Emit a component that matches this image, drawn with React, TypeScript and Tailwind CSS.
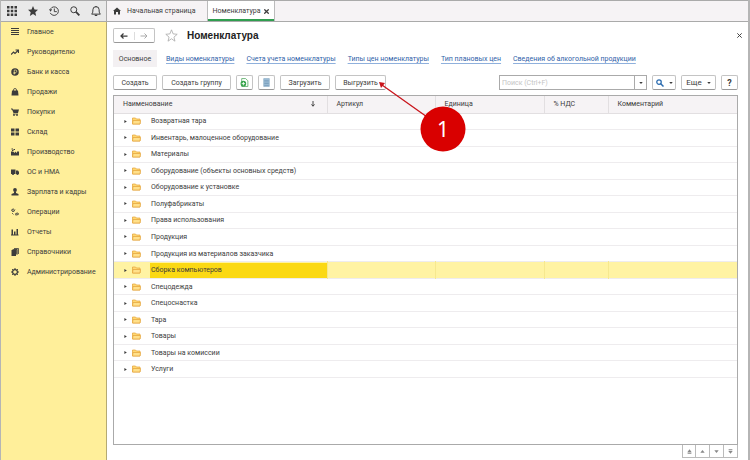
import { useState } from 'react'
import type { ReactNode } from 'react'

interface Section {
    title: string;
    icon: ReactNode;
}

interface Column {
    title: string;
    width: string;
}

const sections: Section[] = [
    { title: 'Главное', icon: <path d="M0 1h16M0 5h16M0 9h16M0 13h16" stroke="currentColor" strokeWidth="2" /> },
    { title: 'Руководителю', icon: <path d="M0 13l5-5 3 3 6-6M9 4h6v6" stroke="currentColor" strokeWidth="2.400" fill="none" /> },
    { title: 'Банк и касса', icon: <><circle cx="8" cy="8" r="7.5" /><path d="M6.500 13V4h2.500a2.300 2.300 0 0 1 0 5H5M5 11h4" stroke="#ffef9a" strokeWidth="1.300" fill="none" /></> },
    { title: 'Продажи', icon: <><path d="M2 5h12l1 10H1z" /><path d="M5 8V4a3 3 0 0 1 6 0v4" stroke="currentColor" strokeWidth="1.600" fill="none" /></> },
    { title: 'Покупки', icon: <><path d="M0 1h3l1 2h12l-2 7H5L2 3H0z" /><path d="M4 12h10" stroke="currentColor" strokeWidth="1.500" /><circle cx="6" cy="14" r="1.800" /><circle cx="12" cy="14" r="1.800" /></> },
    { title: 'Склад', icon: <path d="M0 1h7v6H0zM9 1h7v6H9zM0 9h7v6H0zM9 9h7v6H9z" /> },
    { title: 'Производство', icon: <path d="M0 15V7h4l4 3V7l4 3V7h4v8zM1 1h3v2H1zM5 2h3v2H5zM2 4h3v2H2z" /> },
    { title: 'ОС и НМА', icon: <><path d="M0 3h9v9H0zM10 5h4l2 3v4h-6z" /><circle cx="4" cy="12" r="2.200" /><circle cx="13" cy="12" r="2.200" /></> },
    { title: 'Зарплата и кадры', icon: <><circle cx="8" cy="4" r="3.800" /><path d="M6 7h4v3l5 2v3H1v-3l5-2z" /></> },
    { title: 'Операции', icon: <path d="M1 6l2-4h3M2 7h4l2-4M1 4h6M9 13l2-3h3M9 14h4l2-3M8 12h8M2 10l3 3" stroke="currentColor" strokeWidth="1.500" fill="none" /> },
    { title: 'Отчеты', icon: <path d="M1 3h3v10H1zM6 7h3v6H6zM11 2h3v11h-3zM0 13h15v2H0z" /> },
    { title: 'Справочники', icon: <><path d="M1 4h9v12H1z" /><path d="M3 3h9v11M6 1h9v11" stroke="currentColor" strokeWidth="1.600" fill="none" /><path d="M6 2h7v10H6z" opacity=".7" /></> },
    { title: 'Администрирование', icon: <><circle cx="8" cy="8" r="4.800" stroke="currentColor" strokeWidth="2.400" fill="none" /><path d="M8 0v3M8 13v3M0 8h3M13 8h3M2.300 2.300l2 2M11.700 11.700l2 2M13.700 2.300l-2 2M4.300 11.700l-2 2" stroke="currentColor" strokeWidth="2" /></> },
]

const tools: Section[] = [
    { title: 'Меню', icon: <path d="M0 0h4v4H0zM6 0h4v4H6zM12 0h4v4h-4zM0 6h4v4H0zM6 6h4v4H6zM12 6h4v4h-4zM0 12h4v4H0zM6 12h4v4H6zM12 12h4v4h-4z" /> },
    { title: 'Избранное', icon: <path d="M8 0l2.400 5.500 5.600.5-4.300 4 1.300 6-5-3.200L3 16l1.300-6L0 6l5.600-.5z" /> },
    { title: 'История', icon: <><path d="M2.500 4.500A6.800 6.800 0 1 1 2 11M8.500 4v5h4" stroke="currentColor" strokeWidth="1.500" fill="none" /><path d="M0 5h5L2.500 9z" /></> },
    { title: 'Поиск', icon: <><circle cx="6" cy="6" r="4.800" stroke="currentColor" strokeWidth="1.600" fill="none" /><path d="M9.500 9.500L15 15" stroke="currentColor" strokeWidth="3" /></> },
    { title: 'Уведомления', icon: <><path d="M1 13c2-2 2-4 2-7a5 5 0 0 1 10 0c0 3 0 5 2 7zM8 0v2" stroke="currentColor" strokeWidth="1.600" fill="none" /><path d="M6 14h4v2H6z" /></> },
]

const links = [
    'Виды номенклатуры',
    'Счета учета номенклатуры',
    'Типы цен номенклатуры',
    'Тип плановых цен',
    'Сведения об алкогольной продукции',
]

// the last column takes the width that is left
const columns: Column[] = [
    { title: 'Наименование', width: 'w-[213px]' },
    { title: 'Артикул', width: 'w-[108px]' },
    { title: 'Единица', width: 'w-[109px]' },
    { title: '% НДС', width: 'w-[64px]' },
    { title: 'Комментарий', width: 'w-auto' },
]

const groups = [
    'Возвратная тара',
    'Инвентарь, малоценное оборудование',
    'Материалы',
    'Оборудование (объекты основных средств)',
    'Оборудование к установке',
    'Полуфабрикаты',
    'Права использования',
    'Продукция',
    'Продукция из материалов заказчика',
    'Сборка компьютеров',
    'Спецодежда',
    'Спецоснастка',
    'Тара',
    'Товары',
    'Товары на комиссии',
    'Услуги',
]

const button = 'flex h-[15px] shrink-0 items-center justify-center rounded-[2px] border border-[#c4c4c4] border-b-[#999] bg-white whitespace-nowrap'

const Glyph = ({ children, className }: { children: ReactNode; className: string }) => (
    <svg viewBox="0 0 16 16" fill="currentColor" className={`shrink-0 ${className}`} aria-hidden="true">{children}</svg>
)

const Folder = () => (
    <svg viewBox="0 0 18 16" className="h-2 w-[9px] shrink-0" aria-hidden="true">
        <path d="M1 14V2h6l2 2h7v10z" fill="#ffd872" stroke="#e5a53d" strokeWidth="1.500" />
        <path d="M1 14l1-7h15l-1 7z" fill="#ffe08a" stroke="#e5a53d" strokeWidth="1.500" />
    </svg>
)

const Sidebar = () => (
    <nav className="w-[106px] shrink-0 border-r border-[#b5aa72] bg-[#ffef9a]" aria-label="Разделы">
        <ul className="flex h-[260px] flex-col">
            {sections.map((section) => (
                <li key={section.title} className="flex-1">
                    <a href="#" className="flex h-full items-center gap-2 pl-[10px] whitespace-nowrap">
                        <Glyph className="size-2">{section.icon}</Glyph>
                        {section.title}
                    </a>
                </li>
            ))}
        </ul>
    </nav>
)

const TopBar = () => (
    <header className="flex h-[22px] shrink-0 border-t border-b border-[#aaa] bg-[#f6f3f5]">
        <div className="flex w-[106px] shrink-0 items-center gap-[11px] border-r border-[#aaa] bg-[#e9e9e9] pl-[6px]">
            {tools.map((tool) => (
                <button key={tool.title} type="button" aria-label={tool.title}>
                    <Glyph className="size-[10px]">{tool.icon}</Glyph>
                </button>
            ))}
        </div>
        <a href="#" className="flex w-[100px] shrink-0 items-center gap-[6px] pl-[6px] whitespace-nowrap">
            <Glyph className="size-2"><path d="M8 1L0 8h2v7h4v-5h4v5h4V8h2z" /></Glyph>
            Начальная страница
        </a>
        <div className="flex w-[68px] shrink-0 items-center justify-center gap-[4px] border-x border-[#bbb] bg-white shadow-[inset_0_-2px_0_#2f9e4f]">
            <a href="#">Номенклатура</a>
            <button type="button" aria-label="Закрыть вкладку">
                <Glyph className="size-[5px]"><path d="M1 1l14 14M15 1L1 15" stroke="currentColor" strokeWidth="4" /></Glyph>
            </button>
        </div>
    </header>
)

const Toolbar = () => {
    const [query, setQuery] = useState('')

    return (
        <div className="mt-2 flex gap-[5px]">
            <button type="button" className={`${button} w-[44px]`}>Создать</button>
            <button type="button" className={`${button} w-[69px]`}>Создать группу</button>
            <button type="button" className={`${button} w-[17px]`} aria-label="Создать копированием">
                <Glyph className="size-[9px]">
                    <path d="M3 1h7l4 4v10H3z" fill="#fff" stroke="#5bad68" strokeWidth="1.500" />
                    <circle cx="6" cy="10" r="5" fill="#35a34a" />
                    <path d="M6 7v6M3 10h6" stroke="#fff" strokeWidth="1.500" />
                </Glyph>
            </button>
            <button type="button" className={`${button} w-[17px]`} aria-label="Список">
                <Glyph className="size-[9px]">
                    <path d="M3 1h10v14H3z" fill="#a9c7de" stroke="#7a9fbd" />
                    <path d="M4 4h8M4 7h8M4 10h8M4 13h8" stroke="#537fa3" />
                </Glyph>
            </button>
            <button type="button" className={`${button} w-[50px]`}>Загрузить</button>
            <button type="button" className={`${button} relative w-[51px]`}>
                Выгрузить
                {/* pointer to the export button */}
                <svg viewBox="0 0 90 72" className="pointer-events-none absolute top-[5px] left-[41px] z-10 h-[72px] w-[90px]" aria-hidden="true">
                    <path d="M5 4L60 43" stroke="#c9141b" strokeWidth="1.300" />
                    <path d="M2 1l6 1-4 5z" fill="#c9141b" />
                    <circle cx="66" cy="48" r="22.500" fill="#d90000" />
                    <text x="66" y="56" textAnchor="middle" fill="#fff" fontSize="21" fontFamily="Noto Sans, sans-serif">1</text>
                </svg>
            </button>
            <div className="ml-auto flex h-[15px] w-[148px] border border-[#aaa] bg-white">
                <input
                    type="text"
                    aria-label="Поиск"
                    placeholder="Поиск (Ctrl+F)"
                    value={query}
                    onChange={(e) => setQuery(e.target.value)}
                    className="min-w-0 flex-1 px-[2px] outline-none placeholder:text-[#c4c4c4]"
                />
                <button type="button" className="flex w-[12px] items-center justify-center border-l border-[#aaa]" aria-label="История поиска">
                    <Glyph className="size-1"><path d="M1 4h14l-7 8z" /></Glyph>
                </button>
            </div>
            <button type="button" className={`${button} w-[24px] gap-[5px]`} aria-label="Найти">
                <Glyph className="size-2 text-[#2b6cb0]"><circle cx="6" cy="6" r="4.500" stroke="currentColor" strokeWidth="2.500" fill="none" /><path d="M9 9l6 6" stroke="currentColor" strokeWidth="3" /></Glyph>
                <Glyph className="size-1"><path d="M1 4h14l-7 8z" /></Glyph>
            </button>
            <button type="button" className={`${button} w-[35px] gap-[5px] text-[8px]`}>
                Еще
                <Glyph className="size-1"><path d="M1 4h14l-7 8z" /></Glyph>
            </button>
            <button type="button" className={`${button} w-[17px] text-[9px] font-bold`} aria-label="Справка">?</button>
        </div>
    )
}

const ItemsTable = () => {
    const [selected, setSelected] = useState(9)

    return (
        <div className="mt-[5px] flex-1 border border-[#aaa]">
            <table className="h-[282px] w-full table-fixed border-collapse">
                <thead>
                    <tr className="h-[17px] bg-[#f6f3f5]">
                        {columns.map((column, index) => (
                            <th key={column.title} scope="col" className={`${column.width} border-r border-b border-[#e2dfe1] p-0 text-left font-normal last:border-r-0`}>
                                <div className="flex items-center justify-between pr-[11px] pl-[9px] whitespace-nowrap">
                                    {column.title}
                                    {index === 0 && <Glyph className="size-[6px]"><path d="M8 0v13M4 9l4 5 4-5" stroke="currentColor" strokeWidth="2.500" fill="none" /></Glyph>}
                                </div>
                            </th>
                        ))}
                    </tr>
                </thead>
                <tbody>
                    {groups.map((group, index) => (
                        <tr key={group} onClick={() => setSelected(index)} className={`border-b border-[#eeecee] ${index === selected ? 'bg-[#fff3a3]' : ''}`}>
                            <td className="p-0">
                                <div className="flex h-[15px] items-center pl-[10px] whitespace-nowrap">
                                    <Glyph className="mr-[5px] size-[3px]"><path d="M2 0l13 8-13 8z" /></Glyph>
                                    <Folder />
                                    <span className={`ml-[9px] flex h-full flex-1 items-center pl-[1px] ${index === selected ? 'bg-[#fbd914]' : ''}`}>{group}</span>
                                </div>
                            </td>
                            {columns.slice(1).map((column) => (
                                <td key={column.title} className={`p-0 ${index === selected ? 'border-l border-[#f6e88f]' : ''}`} />
                            ))}
                        </tr>
                    ))}
                </tbody>
            </table>
        </div>
    )
}

const Pager = () => (
    <div className="flex justify-end">
        <div className="flex divide-x divide-[#bbb] border border-t-0 border-[#bbb] text-[#888]">
            <button type="button" className="flex h-[12px] w-[13px] items-center justify-center" aria-label="В начало"><Glyph className="size-[5px]"><path d="M1 10l7-9 7 9zM2 12h12v3H2z" /></Glyph></button>
            <button type="button" className="flex h-[12px] w-[14px] items-center justify-center" aria-label="Вверх"><Glyph className="size-[5px]"><path d="M1 12l7-9 7 9z" /></Glyph></button>
            <button type="button" className="flex h-[12px] w-[14px] items-center justify-center" aria-label="Вниз"><Glyph className="size-[5px]"><path d="M1 4h14l-7 9z" /></Glyph></button>
            <button type="button" className="flex h-[12px] w-[13px] items-center justify-center" aria-label="В конец"><Glyph className="size-[5px]"><path d="M2 1h12v3H2zM1 6h14l-7 9z" /></Glyph></button>
        </div>
    </div>
)

const App = () => {
    return (
        <div className="flex h-screen flex-col border-r-2 border-l border-[#b5b5b5] bg-white font-[Roboto,Arial,sans-serif] text-[7px] leading-[10px] text-[#3c3c3c]">
            <TopBar />
            <div className="flex min-h-0 flex-1">
                <Sidebar />
                <main className="flex min-w-0 flex-1 flex-col pt-[6px] pr-[10px] pb-[2px] pl-[6px]">
                    <div className="flex h-[15px] items-center">
                        <div className={`${button} w-[42px]`}>
                            <button type="button" className="flex flex-1 justify-center border-r border-[#ddd]" aria-label="Назад"><Glyph className="size-2"><path d="M15 8H2M7 3L2 8l5 5" stroke="currentColor" strokeWidth="2.500" fill="none" /></Glyph></button>
                            <button type="button" className="flex flex-1 justify-center text-[#aaa]" aria-label="Вперед"><Glyph className="size-2"><path d="M1 8h13M9 3l5 5-5 5" stroke="currentColor" strokeWidth="2" fill="none" /></Glyph></button>
                        </div>
                        <button type="button" className="ml-[10px] text-[#aaa]" aria-label="В избранное">
                            <Glyph className="size-[13px]"><path d="M8 1l2 5 5 .5-4 3.500 1.300 5L8 12l-4.300 3L5 10 1 6.500 6 6z" stroke="currentColor" fill="none" /></Glyph>
                        </button>
                        <h1 className="ml-[9px] font-['Liberation_Sans',Arial,sans-serif] text-[10px] font-bold text-[#222]">Номенклатура</h1>
                        <button type="button" className="-mr-1 ml-auto" aria-label="Закрыть">
                            <Glyph className="size-[5px]"><path d="M1 1l14 14M15 1L1 15" stroke="currentColor" strokeWidth="3" /></Glyph>
                        </button>
                    </div>
                    <nav className="mt-[7px] flex h-[17px] items-center gap-[12px] whitespace-nowrap" aria-label="Связанные списки">
                        <a href="#" className="-mr-[3px] flex h-full w-[44px] items-center justify-center bg-[#f3f0f2]">Основное</a>
                        {links.map((link) => (
                            <a key={link} href="#" className="text-[#2f62a8] underline decoration-[#8fb0dc] underline-offset-2">{link}</a>
                        ))}
                    </nav>
                    <Toolbar />
                    <ItemsTable />
                    <Pager />
                </main>
            </div>
        </div>
    );
};

export default App;
